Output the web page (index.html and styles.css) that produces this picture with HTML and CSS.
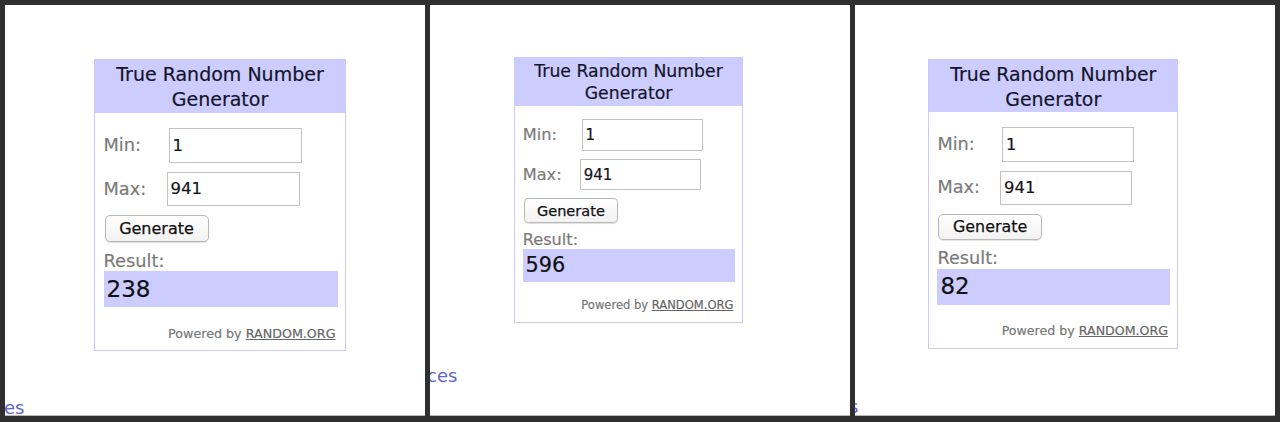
FILE: index.html
```html
<!DOCTYPE html>
<html>
<head>
<meta charset="utf-8">
<link rel="stylesheet" href="styles.css">
</head>
<body>
<div class="strip">
  <div class="panel p1">
    <div class="rng">
      <div class="rng-head">True Random Number<br>Generator</div>
      <div class="rng-body">
        <div class="row"><span class="lbl">Min:</span><input class="field" value="1"></div>
        <div class="row"><span class="lbl">Max:</span><input class="field max" value="941"></div>
        <button class="gen">Generate</button>
        <div class="res-lbl">Result:</div>
        <div class="res">238</div>
        <div class="powered">Powered by <a class="org">RANDOM.ORG</a></div>
      </div>
    </div>
    <a class="frag">es</a>
  </div>
  <div class="panel p2">
    <div class="rng">
      <div class="rng-head">True Random Number<br>Generator</div>
      <div class="rng-body">
        <div class="row"><span class="lbl">Min:</span><input class="field" value="1"></div>
        <div class="row"><span class="lbl">Max:</span><input class="field max" value="941"></div>
        <button class="gen">Generate</button>
        <div class="res-lbl">Result:</div>
        <div class="res">596</div>
        <div class="powered">Powered by <a class="org">RANDOM.ORG</a></div>
      </div>
    </div>
    <a class="frag">ces</a>
  </div>
  <div class="panel p3">
    <div class="rng">
      <div class="rng-head">True Random Number<br>Generator</div>
      <div class="rng-body">
        <div class="row"><span class="lbl">Min:</span><input class="field" value="1"></div>
        <div class="row"><span class="lbl">Max:</span><input class="field max" value="941"></div>
        <button class="gen">Generate</button>
        <div class="res-lbl">Result:</div>
        <div class="res">82</div>
        <div class="powered">Powered by <a class="org">RANDOM.ORG</a></div>
      </div>
    </div>
    <a class="frag">s</a>
  </div>
</div>
</body>
</html>
```

FILE: styles.css
```css
html, body {
  margin: 0;
  padding: 0;
  background: #2f2f2f;
  height: 422px;
  overflow: hidden;
}

.strip {
  display: flex;
  gap: 5px;
  padding: 5px;
}

.panel {
  width: 420px;
  height: 411px;
  background: #fff;
  box-sizing: border-box;
  border-bottom: 1px solid #b8b8b8;
  overflow: hidden;
  display: flex;
  flex-direction: column;
  align-items: flex-start;
  font-family: "DejaVu Sans", Verdana, sans-serif;
}

.p1 { --u: 1px; }
.p2 { --u: 0.909px; }
.p3 { --u: 0.994px; }

.p1 .rng { margin: 54px 0 0 89px; }
.p2 .rng { margin: 52px 0 0 84px; }
.p3 .rng { margin: 54px 0 0 73px; }

.rng {
  width: calc(252 * var(--u));
  border: calc(1.5 * var(--u)) solid #c9c9ff;
  box-sizing: border-box;
  background: #fff;
  -webkit-text-stroke: 0.2px currentColor;
}

.rng-head {
  background: #ccccff;
  height: calc(52.5 * var(--u));
  box-sizing: border-box;
  padding-top: calc(2.2 * var(--u));
  text-align: center;
  font-size: calc(19 * var(--u));
  line-height: calc(24.5 * var(--u));
  color: #14142a;
}

.rng-body {
  padding: calc(15 * var(--u)) calc(7.5 * var(--u)) calc(9.5 * var(--u)) calc(8.5 * var(--u));
  display: flex;
  flex-direction: column;
  align-items: flex-start;
}

.row {
  display: grid;
  grid-template-columns: calc(64 * var(--u)) auto;
  align-items: center;
  height: calc(35 * var(--u));
}

.row + .row {
  margin-top: calc(9 * var(--u));
  height: calc(34 * var(--u));
}

.lbl {
  font-size: calc(17.8 * var(--u));
  line-height: calc(20 * var(--u));
  color: #7b7b7b;
}

.field {
  width: calc(133 * var(--u));
  height: calc(35 * var(--u));
  box-sizing: border-box;
  border: calc(1.3 * var(--u)) solid #c2c2c2;
  padding: 0 0 0 calc(3 * var(--u));
  margin: 0 0 0 calc(1 * var(--u));
  font-family: "DejaVu Sans", Verdana, sans-serif;
  font-size: calc(16.5 * var(--u));
  color: #141420;
  background: #fff;
  outline: none;
  -webkit-text-stroke: 0.2px currentColor;
}

.field.max {
  height: calc(34 * var(--u));
  margin-left: calc(-1 * var(--u));
}

.gen {
  margin: calc(9 * var(--u)) 0 0 calc(1 * var(--u));
  width: calc(104 * var(--u));
  height: calc(27 * var(--u));
  padding: 0;
  border: calc(1.2 * var(--u)) solid #b8b8b8;
  border-radius: calc(5 * var(--u));
  background: linear-gradient(#ffffff, #f2f2f2);
  box-shadow: 0 calc(1 * var(--u)) calc(1 * var(--u)) rgba(0, 0, 0, 0.12);
  font-family: "DejaVu Sans", Verdana, sans-serif;
  font-size: calc(16 * var(--u));
  color: #111;
  -webkit-text-stroke: 0.25px currentColor;
}

.res-lbl {
  margin-top: calc(8 * var(--u));
  font-size: calc(17.8 * var(--u));
  line-height: calc(21 * var(--u));
  color: #7b7b7b;
}

.res {
  align-self: stretch;
  height: calc(36 * var(--u));
  background: #ccccff;
  padding-left: calc(3 * var(--u));
  font-size: calc(23 * var(--u));
  line-height: calc(36 * var(--u));
  color: #111;
}

.powered {
  align-self: stretch;
  margin-top: calc(19 * var(--u));
  padding-right: calc(2 * var(--u));
  text-align: right;
  font-size: calc(12.7 * var(--u));
  line-height: calc(15 * var(--u));
  color: #777;
}

.org {
  color: #666;
  text-decoration: underline;
}

.frag {
  font-size: 18px;
  line-height: 18px;
  color: #6262d2;
  white-space: nowrap;
}

.p1 .frag { margin: 48px 0 0 -1px; }
.p2 .frag { margin: 44px 0 0 -3px; }
.p3 .frag { margin: 49px 0 0 -6px; }
```
